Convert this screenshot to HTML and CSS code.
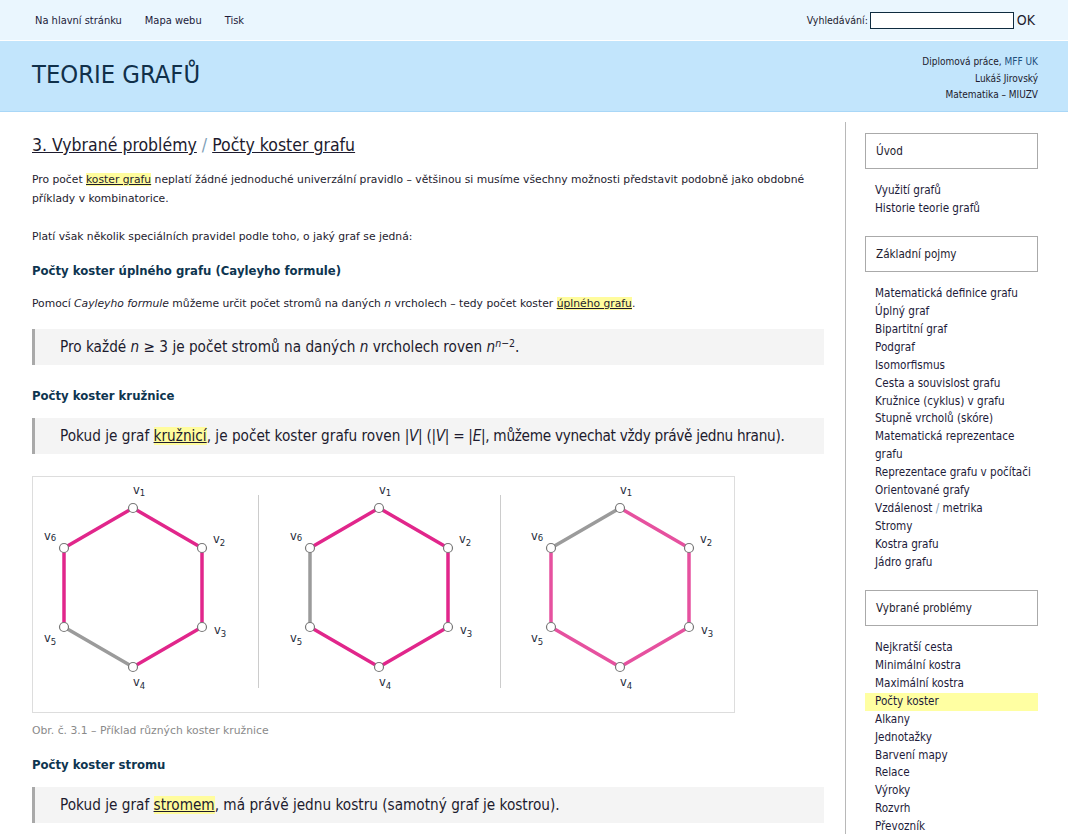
FILE: index.html
```html
<!DOCTYPE html>
<html lang="cs">
<head>
<meta charset="utf-8">
<title>Teorie grafů – Počty koster grafu</title>
<link rel="stylesheet" href="styles.css">
</head>
<body>
<div class="topbar">
  <nav class="topnav">
    <a href="#">Na hlavní stránku</a>
    <a href="#">Mapa webu</a>
    <a href="#">Tisk</a>
  </nav>
  <form class="search">
    <label for="q">Vyhledávání:</label>
    <input id="q" type="text">
    <button type="button">OK</button>
  </form>
</div>
<header class="masthead">
  <h1>TEORIE GRAFŮ</h1>
  <div class="credits">
    <div>Diplomová práce, <a href="#">MFF UK</a></div>
    <div>Lukáš Jirovský</div>
    <div>Matematika – MIUZV</div>
  </div>
</header>
<div class="layout">
  <main class="content">
    <h2><a href="#">3. Vybrané problémy</a> <span class="sep">/</span> <a href="#">Počty koster grafu</a></h2>
    <p class="intro">Pro počet <a class="term" href="#">koster grafu</a> neplatí žádné jednoduché univerzální pravidlo – většinou si musíme všechny možnosti představit podobně jako obdobné příklady v kombinatorice.</p>
    <p>Platí však několik speciálních pravidel podle toho, o jaký graf se jedná:</p>
    <h3>Počty koster úplného grafu (Cayleyho formule)</h3>
    <p>Pomocí <i>Cayleyho formule</i> můžeme určit počet stromů na daných <i>n</i> vrcholech – tedy počet koster <a class="term" href="#">úplného grafu</a>.</p>
    <div class="rule">Pro každé <i>n</i> ≥ 3 je počet stromů na daných <i>n</i> vrcholech roven <i>n</i><sup><i>n</i>−2</sup>.</div>
    <h3>Počty koster kružnice</h3>
    <div class="rule">Pokud je graf <a class="term" href="#">kružnicí</a>, je počet koster grafu roven <span class="tight">|<i>V</i>| (|<i>V</i>| = |<i>E</i>|, můžeme vynechat vždy právě jednu hranu).</span></div>
    <div class="figure">
      <svg width="701" height="235" viewBox="0 0 701 235" xmlns="http://www.w3.org/2000/svg">
        <g stroke="#cccccc" stroke-width="1">
          <line x1="225.5" y1="18" x2="225.5" y2="211"/>
          <line x1="467.5" y1="18" x2="467.5" y2="211"/>
        </g>
        <!-- graph 1 -->
        <g>
          <g stroke-width="3.5" stroke-linecap="round">
            <line x1="100" y1="31" x2="169" y2="71" stroke="#e1268b"/>
            <line x1="169" y1="71" x2="169" y2="150" stroke="#e1268b"/>
            <line x1="169" y1="150" x2="100" y2="190" stroke="#e1268b"/>
            <line x1="100" y1="190" x2="31" y2="150" stroke="#9b9b9b"/>
            <line x1="31" y1="150" x2="31" y2="71" stroke="#e1268b"/>
            <line x1="31" y1="71" x2="100" y2="31" stroke="#e1268b"/>
          </g>
        </g>
        <!-- graph 2 -->
        <g transform="translate(246,0)">
          <g stroke-width="3.5" stroke-linecap="round">
            <line x1="100" y1="31" x2="169" y2="71" stroke="#e1268b"/>
            <line x1="169" y1="71" x2="169" y2="150" stroke="#e1268b"/>
            <line x1="169" y1="150" x2="100" y2="190" stroke="#e1268b"/>
            <line x1="100" y1="190" x2="31" y2="150" stroke="#e1268b"/>
            <line x1="31" y1="150" x2="31" y2="71" stroke="#9b9b9b"/>
            <line x1="31" y1="71" x2="100" y2="31" stroke="#e1268b"/>
          </g>
        </g>
        <!-- graph 3 -->
        <g transform="translate(487,0)">
          <g stroke-width="3.5" stroke-linecap="round">
            <line x1="100" y1="31" x2="169" y2="71" stroke="#e6519f"/>
            <line x1="169" y1="71" x2="169" y2="150" stroke="#e6519f"/>
            <line x1="169" y1="150" x2="100" y2="190" stroke="#e6519f"/>
            <line x1="100" y1="190" x2="31" y2="150" stroke="#e6519f"/>
            <line x1="31" y1="150" x2="31" y2="71" stroke="#e6519f"/>
            <line x1="31" y1="71" x2="100" y2="31" stroke="#9b9b9b"/>
          </g>
        </g>
        <g fill="#ffffff" stroke="#777777" stroke-width="1.2">
          <circle cx="100" cy="31" r="4.5"/><circle cx="169" cy="71" r="4.5"/><circle cx="169" cy="150" r="4.5"/>
          <circle cx="100" cy="190" r="4.5"/><circle cx="31" cy="150" r="4.5"/><circle cx="31" cy="71" r="4.5"/>
          <circle cx="346" cy="31" r="4.5"/><circle cx="415" cy="71" r="4.5"/><circle cx="415" cy="150" r="4.5"/>
          <circle cx="346" cy="190" r="4.5"/><circle cx="277" cy="150" r="4.5"/><circle cx="277" cy="71" r="4.5"/>
          <circle cx="587" cy="31" r="4.5"/><circle cx="656" cy="71" r="4.5"/><circle cx="656" cy="150" r="4.5"/>
          <circle cx="587" cy="190" r="4.5"/><circle cx="518" cy="150" r="4.5"/><circle cx="518" cy="71" r="4.5"/>
        </g>
        <g font-family="DejaVu Sans, sans-serif" font-size="11.5" fill="#1c2a38">
          <text x="100" y="17">v<tspan font-size="8.5" dy="2">1</tspan></text>
          <text x="180" y="66">v<tspan font-size="8.5" dy="3">2</tspan></text>
          <text x="181" y="157">v<tspan font-size="8.5" dy="3">3</tspan></text>
          <text x="100" y="209">v<tspan font-size="8.5" dy="3">4</tspan></text>
          <text x="11" y="165">v<tspan font-size="8.5" dy="3">5</tspan></text>
          <text x="11" y="63">v<tspan font-size="8.5" dy="1">6</tspan></text>

          <text x="346" y="17">v<tspan font-size="8.5" dy="2">1</tspan></text>
          <text x="426" y="66">v<tspan font-size="8.5" dy="3">2</tspan></text>
          <text x="427" y="157">v<tspan font-size="8.5" dy="3">3</tspan></text>
          <text x="346" y="209">v<tspan font-size="8.5" dy="3">4</tspan></text>
          <text x="257" y="165">v<tspan font-size="8.5" dy="3">5</tspan></text>
          <text x="257" y="63">v<tspan font-size="8.5" dy="1">6</tspan></text>

          <text x="587" y="17">v<tspan font-size="8.5" dy="2">1</tspan></text>
          <text x="667" y="66">v<tspan font-size="8.5" dy="3">2</tspan></text>
          <text x="668" y="157">v<tspan font-size="8.5" dy="3">3</tspan></text>
          <text x="587" y="209">v<tspan font-size="8.5" dy="3">4</tspan></text>
          <text x="498" y="165">v<tspan font-size="8.5" dy="3">5</tspan></text>
          <text x="498" y="63">v<tspan font-size="8.5" dy="1">6</tspan></text>
        </g>
      </svg>
    </div>
    <p class="caption">Obr. č. 3.1 – Příklad různých koster kružnice</p>
    <h3>Počty koster stromu</h3>
    <div class="rule">Pokud je graf <a class="term" href="#">stromem</a>, má právě jednu kostru (samotný graf je kostrou).</div>
  </main>
  <aside class="sidebar">
    <div class="sbox">Úvod</div>
    <ul class="slist">
      <li><a href="#">Využití grafů</a></li>
      <li><a href="#">Historie teorie grafů</a></li>
    </ul>
    <div class="sbox">Základní pojmy</div>
    <ul class="slist">
      <li><a href="#">Matematická definice grafu</a></li>
      <li><a href="#">Úplný graf</a></li>
      <li><a href="#">Bipartitní graf</a></li>
      <li><a href="#">Podgraf</a></li>
      <li><a href="#">Isomorfismus</a></li>
      <li><a href="#">Cesta a souvislost grafu</a></li>
      <li><a href="#">Kružnice (cyklus) v grafu</a></li>
      <li><a href="#">Stupně vrcholů (skóre)</a></li>
      <li><a href="#">Matematická reprezentace grafu</a></li>
      <li><a href="#">Reprezentace grafu v počítači</a></li>
      <li><a href="#">Orientované grafy</a></li>
      <li><a href="#">Vzdálenost <span class="sep">/</span> metrika</a></li>
      <li><a href="#">Stromy</a></li>
      <li><a href="#">Kostra grafu</a></li>
      <li><a href="#">Jádro grafu</a></li>
    </ul>
    <div class="sbox">Vybrané problémy</div>
    <ul class="slist">
      <li><a href="#">Nejkratší cesta</a></li>
      <li><a href="#">Minimální kostra</a></li>
      <li><a href="#">Maximální kostra</a></li>
      <li class="current"><a href="#">Počty koster</a></li>
      <li><a href="#">Alkany</a></li>
      <li><a href="#">Jednotažky</a></li>
      <li><a href="#">Barvení mapy</a></li>
      <li><a href="#">Relace</a></li>
      <li><a href="#">Výroky</a></li>
      <li><a href="#">Rozvrh</a></li>
      <li><a href="#">Převozník</a></li>
    </ul>
  </aside>
</div>
</body>
</html>
```
FILE: styles.css
```css
html, body {
  margin: 0;
  padding: 0;
  background: #ffffff;
}
body {
  font-family: "DejaVu Sans", Verdana, sans-serif;
  font-size: 10.75px;
  color: #1d1b2e;
}
a { color: inherit; }

/* top bar */
.topbar {
  height: 41px;
  box-sizing: border-box;
  background: #eaf6fe;
  border-bottom: 1px solid #ffffff;
  display: flex;
  align-items: center;
  justify-content: space-between;
  padding: 0 30px 0 35px;
  font-family: "DejaVu Sans Condensed", "DejaVu Sans", sans-serif;
  font-stretch: condensed;
}
.topnav {
  display: flex;
  gap: 23px;
  font-size: 11px;
}
.topnav a { text-decoration: none; color: #1d1b3a; }
.search {
  display: flex;
  align-items: center;
  margin: 0;
  font-size: 10.5px;
}
.search label { margin-right: 2px; }
.search input {
  width: 144px;
  height: 17px;
  box-sizing: border-box;
  border: 1px solid #0f2b3f;
  padding: 0 2px;
  margin: 0;
  background: #fff;
}
.search button {
  border: 0;
  background: transparent;
  font-family: inherit;
  font-stretch: condensed;
  font-size: 14px;
  padding: 0 3px;
  color: #1d1b2e;
}

/* masthead */
.masthead {
  height: 71px;
  box-sizing: border-box;
  background: #c2e5fc;
  border-bottom: 1px solid #a9d7f7;
  display: flex;
  justify-content: space-between;
  padding: 0 30px 0 32px;
  font-family: "DejaVu Sans Condensed", "DejaVu Sans", sans-serif;
  font-stretch: condensed;
}
.masthead h1 {
  margin: 0;
  align-self: center;
  font-weight: normal;
  font-size: 25.3px;
  color: #10304a;
  padding-bottom: 3px;
}
.credits {
  text-align: right;
  font-size: 10px;
  line-height: 16.5px;
  padding-top: 13px;
  color: #1d1b2e;
}
.credits a { text-decoration: none; color: #1c4f7c; }

/* layout */
.layout {
  display: flex;
  align-items: flex-start;
}
.content {
  width: 845px;
  flex: none;
  box-sizing: border-box;
  padding: 22px 21px 0 32px;
}
.sidebar {
  flex: 1;
  margin-top: 10px;
  border-left: 1px solid #b8b8b8;
  padding: 11px 30px 0 19px;
  min-height: 720px;
  font-family: "DejaVu Sans Condensed", "DejaVu Sans", sans-serif;
  font-stretch: condensed;
  font-size: 11.6px;
}

/* content */
.content h2 {
  margin: 0 0 14px;
  font-weight: normal;
  font-size: 17.5px;
  line-height: 22px;
  color: #1d1b2e;
  font-family: "DejaVu Sans Condensed", "DejaVu Sans", sans-serif;
  font-stretch: condensed;
}
.sep { color: #7f9fb8; }
.content p {
  margin: 0 0 15px;
  line-height: 19px;
}
.content p.intro { margin-bottom: 19px; }
.content h3 {
  margin: 16px 0 11px;
  font-size: 11.7px;
  line-height: 19px;
  color: #0e3550;
}
.content h3 + p { margin-top: 13px; }
.term {
  background: #fffc9d;
  text-decoration: underline;
}
.rule {
  margin: 12px 0 22px;
  height: 36px;
  line-height: 36px;
  box-sizing: border-box;
  background: #f4f4f4;
  border-left: 3px solid #a9a9a9;
  padding-left: 25px;
  font-size: 15.2px;
  font-family: "DejaVu Sans Condensed", "DejaVu Sans", sans-serif;
  font-stretch: condensed;
}
.content p + .rule { margin-top: 16px; }
.rule .tight { letter-spacing: -0.3px; }
.rule sup {
  font-size: 10.5px;
  line-height: 0;
  vertical-align: 5px;
}
.figure {
  margin-top: 22px;
  width: 701px;
  border: 1px solid #dddddd;
  line-height: 0;
}
.figure svg { display: block; }
.content p.caption {
  margin: 8px 0 15px;
  color: #8a8a8a;
  font-size: 10.8px;
}

/* sidebar */
.sbox {
  height: 36px;
  box-sizing: border-box;
  border: 1px solid #aaaaaa;
  padding-left: 10px;
  line-height: 34px;
  color: #1d1b2e;
}
.slist {
  list-style: none;
  margin: 13px 0 18px;
  padding: 0;
}
.slist li {
  line-height: 17.93px;
  padding-left: 10px;
}
.slist a { text-decoration: none; color: #1d1b3a; }
.slist li.current { background: #ffffa2; }
```
